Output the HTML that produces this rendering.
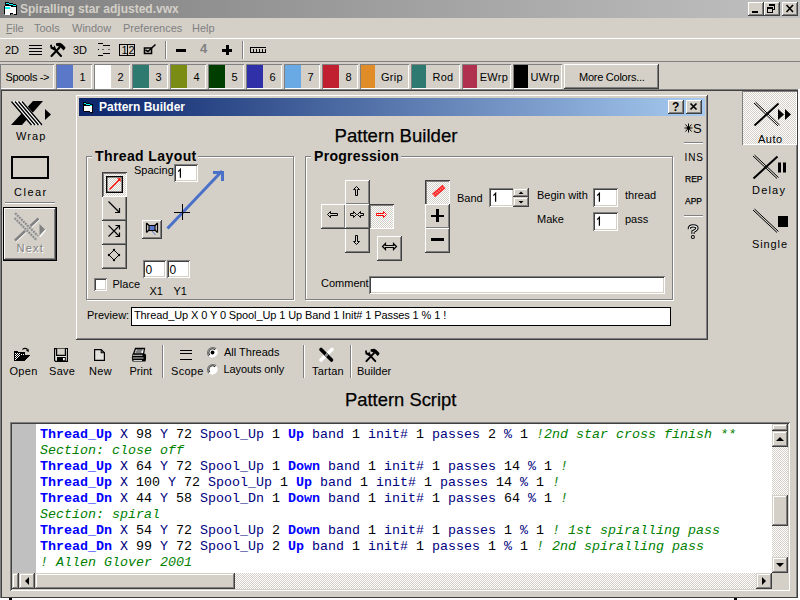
<!DOCTYPE html>
<html><head><meta charset="utf-8">
<style>
*{margin:0;padding:0;box-sizing:border-box}
html,body{width:800px;height:600px;overflow:hidden;background:#d4d0c8;font-family:"Liberation Sans",sans-serif;font-size:11px;color:#000}
.a{position:absolute}
svg{position:absolute;overflow:visible}
.raised{box-shadow:inset -1px -1px #404040,inset 1px 1px #fff,inset -2px -2px #808080,inset 2px 2px #d4d0c8}
.sunken{box-shadow:inset 1px 1px #808080,inset -1px -1px #fff,inset 2px 2px #404040,inset -2px -2px #d4d0c8}
.sbtn{box-shadow:inset -1px -1px #404040,inset 1px 1px #d4d0c8,inset -2px -2px #808080,inset 2px 2px #fff;background:#d4d0c8}
.thin{box-shadow:inset -1px -1px #808080,inset 1px 1px #fff}
.thins{box-shadow:inset 1px 1px #808080,inset -1px -1px #fff}
.t{position:absolute;white-space:nowrap;line-height:1}
.dither{background-color:#fff;background-image:linear-gradient(45deg,#d4d0c8 25%,transparent 25%,transparent 75%,#d4d0c8 75%),linear-gradient(45deg,#d4d0c8 25%,transparent 25%,transparent 75%,#d4d0c8 75%);background-size:2px 2px;background-position:0 0,1px 1px}
</style></head><body>
<div class="a " style="left:0px;top:0px;width:800px;height:18px;background:linear-gradient(to right,#808080,#c0c0c0)"></div>
<svg style="left:4px;top:2px" width="13" height="14" shape-rendering="crispEdges"><path d="M1 0h4v1h4v1h3v1h1v10h-3v-1h-3v1h-6v-1h-1v-8h1z" fill="#000"/><path d="M2 1h3v1h-3zM5 2h4v1h-4zM9 3h3v1h-3z" fill="#0ff"/><path d="M1 4h6v1h5v7h-3v-1h-3v2h-5z" fill="#fff"/><path d="M1 5h5v2h-5z" fill="#0ff"/></svg>
<div class="t" style="left:20px;top:3px;font-weight:bold;font-size:12px;color:#d4d0c8">Spiralling star adjusted.vwx</div>
<div class="a raised" style="left:748px;top:2px;width:16px;height:14px;background:#d4d0c8"></div>
<div class="a raised" style="left:764px;top:2px;width:16px;height:14px;background:#d4d0c8"></div>
<div class="a raised" style="left:782px;top:2px;width:16px;height:14px;background:#d4d0c8"></div>
<svg style="left:748px;top:2px" width="16" height="14" shape-rendering="crispEdges"><rect x="4" y="9" width="6" height="2" fill="#000"/></svg>
<svg style="left:764px;top:2px" width="16" height="14" shape-rendering="crispEdges"><path d="M5 2h6v5h-1v-3h-5zM9 7h2v1h-2z" fill="#000"/><path d="M3 5h6v6h-6zM4 7v3h4v-3z" fill="#000" fill-rule="evenodd"/></svg>
<svg style="left:782px;top:2px" width="16" height="14"><path d="M4.5 3L11 10M11 3L4.5 10" stroke="#000" stroke-width="1.6"/></svg>
<div class="t" style="left:6px;top:22.5px;color:#808080">File</div>
<div class="t" style="left:34px;top:22.5px;color:#808080">Tools</div>
<div class="t" style="left:72px;top:22.5px;color:#808080">Window</div>
<div class="t" style="left:123px;top:22.5px;color:#808080">Preferences</div>
<div class="t" style="left:192px;top:22.5px;color:#808080">Help</div>
<div class="a " style="left:6px;top:33px;width:6px;height:1px;background:#808080"></div>
<div class="a " style="left:0px;top:38px;width:800px;height:24px;box-shadow:inset 0 1px #fff,inset 0 -1px #808080"></div>
<div class="t" style="left:5px;top:45px;font-size:11px">2D</div>
<svg style="left:29px;top:45px" width="13" height="10"><path d="M0 0.5H13M0 3.5H13M0 6.5H13M0 9.5H13" stroke="#000" stroke-width="1.2"/></svg>
<svg style="left:49px;top:42px" width="18" height="16" viewBox="0 0 18 16"><path d="M2.5 14L10.5 5.5M12 14L5 6.5" stroke="#000" stroke-width="2.1" stroke-linecap="round"/><path d="M1 3L3 2.5V4.5L4.5 5.2L5.6 3.6L6.5 5.8L7 7.2L5 8.2L1.6 6.6Z" fill="#000"/><path d="M7 1.2L11 0.8L13.2 2L16.4 5.2L16.2 6.6L14.6 8.4L11.6 5.6L9 4.2L7 3.6Z" fill="#000"/></svg>
<div class="t" style="left:73px;top:45px;font-size:11px">3D</div>
<svg style="left:97px;top:42px" width="14" height="14"><path d="M1 1.5H6M6 3.5H13M1 13.5H6M6 11.5H13" stroke="#000" stroke-width="1"/><path d="M1 7.5H2M5.5 7.5H6.5M11.5 7.5H12.5" stroke="#000" stroke-width="1"/></svg>
<svg style="left:119px;top:44px" width="16" height="12" shape-rendering="crispEdges"><rect x="0.5" y="0.5" width="15" height="11" fill="none" stroke="#000" stroke-width="1.4"/><rect x="8" y="0" width="1" height="12" fill="#000"/></svg>
<div class="t" style="left:121.5px;top:45px;font-size:11px">1</div>
<div class="t" style="left:128.5px;top:45px;font-size:11px">2</div>
<svg style="left:143px;top:43px" width="14" height="12"><path d="M1.5 5H8.5V10.5H1.5z" fill="none" stroke="#000" stroke-width="1.6"/><path d="M2.5 7L5 8.5L12.5 1.5" fill="none" stroke="#000" stroke-width="1.5"/></svg>
<div class="a" style="left:165px;top:41px;width:2px;height:18px;box-shadow:inset 1px 0 #808080,inset -1px 0 #fff"></div>
<div class="a" style="left:176px;top:49px;width:10px;height:3px;background:#000"></div>
<div class="t" style="left:200px;top:42px;font-size:13px;font-weight:bold;color:#808080">4</div>
<div class="a" style="left:222px;top:49px;width:10px;height:2.5px;background:#000"></div>
<div class="a" style="left:225.5px;top:45px;width:3px;height:10px;background:#000"></div>
<div class="a" style="left:242px;top:41px;width:2px;height:18px;box-shadow:inset 1px 0 #808080,inset -1px 0 #fff"></div>
<svg style="left:250px;top:47px" width="17" height="6" shape-rendering="crispEdges"><rect x="0" y="0" width="16" height="1.3" fill="#000"/><rect x="0" y="4.7" width="16" height="1.3" fill="#000"/><rect x="0" y="0" width="1.3" height="6" fill="#000"/><rect x="14.7" y="2" width="1.3" height="4" fill="#000"/><rect x="3" y="2" width="1.2" height="3" fill="#000"/><rect x="6" y="2" width="1.2" height="3" fill="#000"/><rect x="9" y="2" width="1.2" height="3" fill="#000"/><rect x="12" y="2" width="1.2" height="3" fill="#000"/></svg>

<div class="a thins" style="left:0px;top:64px;width:54px;height:25px;"></div>
<div class="t" style="left:5.5px;top:72px;letter-spacing:-0.35px">Spools -&gt;</div>
<div class="a thins" style="left:56px;top:64px;width:36px;height:25px;"></div>
<div class="a " style="left:57px;top:65px;width:16px;height:23px;background:#5b78c8"></div>
<div class="t" style="left:73px;width:19px;text-align:center;top:72px">1</div>
<div class="a thins" style="left:94px;top:64px;width:36px;height:25px;"></div>
<div class="a " style="left:95px;top:65px;width:16px;height:23px;background:#ffffff"></div>
<div class="t" style="left:111px;width:19px;text-align:center;top:72px">2</div>
<div class="a thins" style="left:132px;top:64px;width:36px;height:25px;"></div>
<div class="a " style="left:133px;top:65px;width:16px;height:23px;background:#2e7a70"></div>
<div class="t" style="left:149px;width:19px;text-align:center;top:72px">3</div>
<div class="a thins" style="left:170px;top:64px;width:36px;height:25px;"></div>
<div class="a " style="left:171px;top:65px;width:16px;height:23px;background:#7a8c14"></div>
<div class="t" style="left:187px;width:19px;text-align:center;top:72px">4</div>
<div class="a thins" style="left:208px;top:64px;width:36px;height:25px;"></div>
<div class="a " style="left:209px;top:65px;width:16px;height:23px;background:#003e00"></div>
<div class="t" style="left:225px;width:19px;text-align:center;top:72px">5</div>
<div class="a thins" style="left:246px;top:64px;width:36px;height:25px;"></div>
<div class="a " style="left:247px;top:65px;width:16px;height:23px;background:#3030a8"></div>
<div class="t" style="left:263px;width:19px;text-align:center;top:72px">6</div>
<div class="a thins" style="left:284px;top:64px;width:36px;height:25px;"></div>
<div class="a " style="left:285px;top:65px;width:16px;height:23px;background:#6aaae4"></div>
<div class="t" style="left:301px;width:19px;text-align:center;top:72px">7</div>
<div class="a thins" style="left:322px;top:64px;width:36px;height:25px;"></div>
<div class="a " style="left:323px;top:65px;width:16px;height:23px;background:#c02030"></div>
<div class="t" style="left:339px;width:19px;text-align:center;top:72px">8</div>
<div class="a thins" style="left:360px;top:64px;width:49px;height:25px;"></div>
<div class="a " style="left:361px;top:65px;width:14px;height:23px;background:#e08c28"></div>
<div class="t" style="left:375px;width:34px;text-align:center;top:72px;letter-spacing:0.3px">Grip</div>
<div class="a thins" style="left:411px;top:64px;width:49px;height:25px;"></div>
<div class="a " style="left:412px;top:65px;width:14px;height:23px;background:#2e7a70"></div>
<div class="t" style="left:426px;width:34px;text-align:center;top:72px;letter-spacing:0.3px">Rod</div>
<div class="a thins" style="left:462px;top:64px;width:49px;height:25px;"></div>
<div class="a " style="left:463px;top:65px;width:14px;height:23px;background:#b03050"></div>
<div class="t" style="left:477px;width:34px;text-align:center;top:72px;letter-spacing:0.3px">EWrp</div>
<div class="a thins" style="left:513px;top:64px;width:49px;height:25px;"></div>
<div class="a " style="left:514px;top:65px;width:14px;height:23px;background:#000000"></div>
<div class="t" style="left:528px;width:34px;text-align:center;top:72px;letter-spacing:0.3px">UWrp</div>
<div class="a raised" style="left:564px;top:64px;width:95px;height:25px;"></div>
<div class="t" style="left:579px;top:72px;letter-spacing:-0.25px">More Colors...</div>
<div class="a " style="left:0px;top:89px;width:798px;height:509px;box-shadow:inset 1px 1px #808080,inset 2px 2px #404040,inset -1px -1px #404040,inset -2px 0 #808080"></div>
<div class="a " style="left:798px;top:89px;width:2px;height:511px;background:#fff"></div>
<div class="a " style="left:0px;top:598px;width:800px;height:2px;background:#fff"></div>
<div class="a " style="left:9px;top:598px;width:3px;height:2px;background:#000"></div>
<div class="a " style="left:734px;top:598px;width:3px;height:2px;background:#000"></div>
<div class="a raised" style="left:76px;top:95px;width:632px;height:245px;"></div>
<div class="a " style="left:79px;top:98px;width:626px;height:18px;background:linear-gradient(to right,#0a246a,#a6caf0)"></div>
<div class="t" style="left:99px;top:101px;font-weight:bold;font-size:12px;color:#fff">Pattern Builder</div>
<svg style="left:11px;top:101px" width="41" height="25" viewBox="0 0 41 25">
<path d="M0 24H11L32 0H22z" fill="#000"/>
<path d="M0 0H12L32 24H20z" fill="#fff"/>
<path d="M0.5 0.5L20.5 24M4 0.5L24 24M7.5 0.5L27.5 24M11 0.5L31 24" stroke="#000" stroke-width="1.4"/>
<path d="M34 8V19L40 13.5z" fill="#000"/>
</svg>
<div class="t" style="left:16px;top:131px;letter-spacing:1.1px">Wrap</div>
<div class="a " style="left:11px;top:156px;width:38px;height:23px;border:2px solid #000"></div>
<div class="t" style="left:14px;top:187px;letter-spacing:1.5px">Clear</div>
<div class="a " style="left:5px;top:202px;width:50px;height:2px;box-shadow:inset 0 1px #808080,inset 0 -1px #fff"></div>
<div class="a " style="left:3px;top:207px;width:54px;height:54px;border:1px solid #000"></div>
<div class="a raised" style="left:4px;top:208px;width:52px;height:52px;"></div>
<svg style="left:0px;top:0px" width="60" height="260">
<path d="M16 241.5L39.5 219.5" stroke="#fff" stroke-width="1.5"/>
<path d="M15 240.5L38.5 218.5" stroke="#808080" stroke-width="2.4"/>
<path d="M14.5 212.5L38 236M14 217.5L36.5 240" stroke="#d4d0c8" stroke-width="3.2"/>
<path d="M14.5 212.5L38 236M14 217.5L36.5 240" stroke="#888" stroke-width="2.2"/>
<path d="M14.5 212.5L38 236M14 217.5L36.5 240" stroke="#fff" stroke-width="2.2" stroke-dasharray="1 1.83" opacity="0.6"/>
<path d="M40 236.5L45.5 230" stroke="#fff" stroke-width="1.3"/>
<path d="M39.5 224L45 229.5L39.5 235.5Z" fill="#808080"/>
</svg>
<div class="t" style="left:16.5px;top:242.5px;letter-spacing:1.2px;color:#808080;text-shadow:1px 1px #fff">Next</div>
<div class="a dither" style="left:742px;top:91px;width:55px;height:54px;box-shadow:inset 1px 1px #808080,inset -1px -1px #fff"></div>
<svg style="left:752px;top:101px" width="42" height="27" viewBox="0 0 42 27">
<path d="M2 2L26 25M3.5 1L27.5 24" stroke="#000" stroke-width="1"/>
<path d="M2.5 24.5L26.5 2.5" stroke="#000" stroke-width="2"/>
<path d="M26 8V19L32 13.5zM33 8V19L39 13.5z" fill="#000"/>
</svg>
<div class="t" style="left:758px;top:134px;letter-spacing:0.5px">Auto</div>
<svg style="left:752px;top:155px" width="42" height="26" viewBox="0 0 42 26">
<path d="M1 1L25 23.5M2.5 0L26.5 22.5" stroke="#000" stroke-width="1"/>
<path d="M1.5 23.5L25.5 1.5" stroke="#000" stroke-width="2"/>
<rect x="26" y="7.5" width="3" height="10" fill="#000"/><rect x="31" y="7.5" width="3" height="10" fill="#000"/>
</svg>
<div class="t" style="left:752px;top:185px;letter-spacing:1.2px">Delay</div>
<svg style="left:752px;top:209px" width="42" height="26" viewBox="0 0 42 26">
<path d="M1 1L25 23.5M2.5 0L26.5 22.5" stroke="#000" stroke-width="1"/>
<rect x="26" y="7" width="10" height="11" fill="#000"/>
</svg>
<div class="t" style="left:752px;top:239px;letter-spacing:0.9px">Single</div>
<div class="a raised" style="left:668px;top:100px;width:16px;height:14px;background:#d4d0c8"></div>
<div class="a raised" style="left:686px;top:100px;width:16px;height:14px;background:#d4d0c8"></div>
<div class="t" style="left:672px;top:101px;font-weight:bold;font-size:12px">?</div>
<svg style="left:686px;top:100px" width="16" height="14"><path d="M4.5 3.5L10.5 9.5M10.5 3.5L4.5 9.5" stroke="#000" stroke-width="1.7"/></svg>
<svg style="left:83px;top:102px" width="10" height="11" shape-rendering="crispEdges"><path d="M0 0h3v1h4v1h3v9h-3v-1h-6v-1h-1z" fill="#000"/><path d="M1 1h2v1h-2zM3 2h4v1h-4zM7 3h2v1h-2z" fill="#0ff"/><path d="M1 4h8v6h-2v-1h-6z" fill="#fff"/></svg>
<div class="t" style="left:334.5px;top:126.5px;font-size:18.6px;-webkit-text-stroke:0.25px #000">Pattern Builder</div>
<svg style="left:684px;top:123px" width="9" height="10"><path d="M4.5 0.5V9.5M0.5 5H8.5M1.5 1.5L7.5 8.5M7.5 1.5L1.5 8.5" stroke="#000" stroke-width="1"/><circle cx="4.5" cy="5" r="1.6"/></svg>
<div class="t" style="left:693px;top:121.5px;font-size:13px">S</div>
<div class="a " style="left:684px;top:142px;width:19px;height:2px;box-shadow:inset 0 1px #808080,inset 0 -1px #fff"></div>
<div class="t" style="left:684.5px;top:153px;font-size:10px;letter-spacing:0.9px">INS</div>
<div class="t" style="left:685px;top:175px;font-size:8.5px;-webkit-text-stroke:0.25px #000">REP</div>
<div class="t" style="left:685px;top:197px;font-size:8.5px;-webkit-text-stroke:0.25px #000">APP</div>
<div class="a " style="left:684px;top:215px;width:19px;height:2px;box-shadow:inset 0 1px #808080,inset 0 -1px #fff"></div>
<svg style="left:682px;top:220px" width="22" height="22"><path d="M7.3 9C7 6.7 8.6 5.9 11 5.9S15 6.6 15 8.2C15 9.7 13 10.6 11 11.6V14" fill="none" stroke="#000" stroke-width="3.2"/><path d="M7.3 9C7 6.7 8.6 5.9 11 5.9S15 6.6 15 8.2C15 9.7 13 10.6 11 11.6V14" fill="none" stroke="#fff" stroke-width="1.1"/><circle cx="10.9" cy="17" r="2" fill="#000"/><circle cx="10.9" cy="17" r="0.9" fill="#fff"/></svg>
<div class="a " style="left:87px;top:157px;width:208px;height:144px;border:1px solid #fff"></div>
<div class="a " style="left:86px;top:156px;width:208px;height:144px;border:1px solid #808080"></div>
<div class="a " style="left:92px;top:148px;width:106px;height:16px;background:#d4d0c8"></div>
<div class="t" style="left:95px;top:149px;font-size:14px;font-weight:bold;letter-spacing:0.4px">Thread Layout</div>
<div class="t" style="left:134px;top:165px;">Spacing</div>
<div class="a sunken" style="left:174px;top:164px;width:24px;height:18px;background:#fff"></div>
<svg style="left:0;top:0" width="800" height="600"><path d="M178.20000000000002 171.6L180.4 169.3V177.8" fill="none" stroke="#000" stroke-width="1.25"/></svg>
<div class="a raised" style="left:102px;top:244px;width:25px;height:25px;"></div>
<div class="a raised" style="left:102px;top:220px;width:25px;height:25px;"></div>
<div class="a raised" style="left:102px;top:196px;width:25px;height:25px;"></div>
<div class="a dither" style="left:102px;top:172px;width:25px;height:25px;box-shadow:inset 1px 1px #404040,inset -1px -1px #fff,inset 2px 2px #808080"></div>
<svg style="left:106px;top:176px" width="17" height="17"><rect x="0.7" y="0.7" width="15.6" height="15.6" fill="none" stroke="#000" stroke-width="1.4"/><path d="M3.5 13.5L13.5 3.5" stroke="#f00" stroke-width="1.2"/><path d="M11 2.3H14.7V6z" fill="#f00"/></svg>
<svg style="left:102px;top:196px" width="25" height="24"><path d="M6.5 5.5L17.5 16.5" stroke="#000" stroke-width="1.2"/><path d="M17.5 12V16.5H13" stroke="#000" stroke-width="1.2" fill="none"/></svg>
<svg style="left:102px;top:220px" width="25" height="24"><path d="M6.5 5.5L17.5 16.5M6.5 16.5L17.5 5.5" stroke="#000" stroke-width="1.1"/><path d="M13.5 5.5H17.5V9.5M13.5 16.5H17.5V12.5" stroke="#000" stroke-width="1.2" fill="none"/></svg>
<svg style="left:102px;top:244px" width="25" height="24"><path d="M12 6L17 11L12 16L7 11z" stroke="#000" stroke-width="1" fill="none"/><circle cx="12" cy="6" r="1.2"/><circle cx="17" cy="11" r="1.2"/><circle cx="12" cy="16" r="1.2"/><circle cx="7" cy="11" r="1.2"/></svg>
<div class="a raised" style="left:142px;top:220px;width:20px;height:19px;"></div>
<svg style="left:142px;top:220px" width="20" height="19"><path d="M4.5 3V12.5M4.5 3L7 5.5M4.5 12.5L7 10M15.5 3V12.5M15.5 3L13 5.5M15.5 12.5L13 10" stroke="#000" stroke-width="1.2" fill="none"/><path d="M10 11L13.5 15" stroke="#5a78d0" stroke-width="1"/><rect x="7" y="5.5" width="6" height="5" fill="#5a78d0" stroke="#000" stroke-width="1.1"/></svg>
<svg style="left:160px;top:165px" width="70" height="70"><path d="M7.5 63.5L62 6" stroke="#4a70c8" stroke-width="3"/><path d="M53 7.5H62.5V16" stroke="#4a70c8" stroke-width="3" fill="none"/><path d="M14 47.5H30M22.5 39V55" stroke="#000" stroke-width="1"/></svg>
<div class="a sunken" style="left:143px;top:260px;width:23px;height:18px;background:#fff"></div>
<div class="a sunken" style="left:167px;top:260px;width:23px;height:18px;background:#fff"></div>
<div class="t" style="left:145.5px;top:263.5px;font-size:12px">0</div>
<div class="t" style="left:169.5px;top:263.5px;font-size:12px">0</div>
<div class="a sunken" style="left:94px;top:278px;width:13px;height:13px;background:#fff"></div>
<div class="t" style="left:112.5px;top:279px;font-size:11px">Place</div>
<div class="t" style="left:149.5px;top:285.5px;font-size:11px">X1</div>
<div class="t" style="left:173.5px;top:285.5px;font-size:11px">Y1</div>
<div class="a " style="left:306px;top:157px;width:368px;height:144px;border:1px solid #fff"></div>
<div class="a " style="left:305px;top:156px;width:368px;height:144px;border:1px solid #808080"></div>
<div class="a " style="left:311px;top:148px;width:90px;height:16px;background:#d4d0c8"></div>
<div class="t" style="left:314px;top:149px;font-size:14px;font-weight:bold;letter-spacing:0.3px">Progression</div>
<div class="a raised" style="left:345px;top:180px;width:25px;height:25px;"></div>
<div class="a raised" style="left:321px;top:204px;width:25px;height:25px;"></div>
<div class="a raised" style="left:345px;top:228px;width:25px;height:25px;"></div>
<div class="a dither" style="left:369px;top:204px;width:25px;height:25px;box-shadow:inset 1px 1px #404040,inset -1px -1px #fff,inset 2px 2px #808080"></div>
<div class="a raised" style="left:345px;top:204px;width:25px;height:25px;"></div>
<div class="a raised" style="left:377px;top:236px;width:25px;height:25px;"></div>
<svg style="left:345px;top:180px" width="24" height="24"><path d="M11.5 6.5L14.5 9.5H12.5V15.5H10.5V9.5H8.5Z" fill="none" stroke="#000" stroke-width="1"/></svg>
<svg style="left:345px;top:228px" width="24" height="24"><path d="M11.5 16.5L14.5 13.5H12.5V7.5H10.5V13.5H8.5Z" fill="none" stroke="#000" stroke-width="1"/></svg>
<svg style="left:321px;top:204px" width="24" height="24"><path d="M6.5 10.5L9.5 7.5V9.5H16.5V11.5H9.5V13.5Z" fill="none" stroke="#000" stroke-width="1"/></svg>
<svg style="left:369px;top:204px" width="24" height="24"><path d="M17.5 10.5L14.5 7.5V9.5H7.5V11.5H14.5V13.5Z" fill="none" stroke="#f00" stroke-width="1"/></svg>
<svg style="left:345px;top:204px" width="24" height="24"><path d="M11.5 10.5L8.5 7.5V9.5H5.5V11.5H8.5V13.5Z M12.5 10.5L15.5 7.5V9.5H18.5V11.5H15.5V13.5Z" fill="none" stroke="#000" stroke-width="1"/></svg>
<svg style="left:377px;top:236px" width="25" height="25"><path d="M5.5 10.5L8.5 7.5V9.5H16.5V7.5L19.5 10.5L16.5 13.5V11.5H8.5V13.5Z" fill="none" stroke="#000" stroke-width="1.2"/></svg>
<div class="a dither" style="left:425px;top:180px;width:25px;height:25px;box-shadow:inset 1px 1px #404040,inset -1px -1px #fff,inset 2px 2px #808080"></div>
<svg style="left:425px;top:180px" width="25" height="24"><path d="M8.5 15.5L19 6.5" stroke="#ff2020" stroke-width="4.4"/><path d="M8.5 15.5L19 6.5" stroke="#ffb0b0" stroke-width="2" stroke-dasharray="1 1.2" opacity="0.8"/></svg>
<div class="a raised" style="left:425px;top:204px;width:25px;height:25px;"></div>
<div class="a raised" style="left:425px;top:228px;width:25px;height:25px;"></div>
<div class="a " style="left:431px;top:214.5px;width:13px;height:2.5px;background:#000"></div>
<div class="a " style="left:436px;top:209px;width:2.5px;height:13px;background:#000"></div>
<div class="a " style="left:431px;top:238px;width:13px;height:2.5px;background:#000"></div>
<div class="t" style="left:457px;top:193px;">Band</div>
<div class="a sunken" style="left:489px;top:188px;width:25px;height:19px;background:#fff"></div>
<svg style="left:0;top:0" width="800" height="600"><path d="M493.40000000000003 195.6L495.6 193.3V201.8" fill="none" stroke="#000" stroke-width="1.25"/></svg>
<div class="a sbtn" style="left:513px;top:188px;width:16px;height:9px;"></div>
<div class="a sbtn" style="left:513px;top:197px;width:16px;height:10px;"></div>
<svg style="left:513px;top:188px" width="16" height="19"><path d="M5.5 6H10.5L8 3.5z M5.5 13H10.5L8 15.5z" fill="#000"/></svg>
<div class="t" style="left:537px;top:190px;">Begin with</div>
<div class="a sunken" style="left:593px;top:188px;width:25px;height:19px;background:#fff"></div>
<svg style="left:0;top:0" width="800" height="600"><path d="M597.1999999999999 195.6L599.4 193.3V201.8" fill="none" stroke="#000" stroke-width="1.25"/></svg>
<div class="t" style="left:625px;top:190px;">thread</div>
<div class="t" style="left:537px;top:214px;">Make</div>
<div class="a sunken" style="left:593px;top:212px;width:25px;height:19px;background:#fff"></div>
<svg style="left:0;top:0" width="800" height="600"><path d="M597.1999999999999 219.6L599.4 217.3V225.8" fill="none" stroke="#000" stroke-width="1.25"/></svg>
<div class="t" style="left:625px;top:214px;">pass</div>
<div class="t" style="left:321px;top:278px;">Comment</div>
<div class="a sunken" style="left:369px;top:276px;width:296px;height:18px;background:#fff"></div>
<div class="t" style="left:87px;top:310px;font-size:11px">Preview:</div>
<div class="a " style="left:131px;top:307px;width:540px;height:19px;border:1px solid #000;background:#fff"></div>
<div class="t" style="left:134px;top:310px;font-size:11px;letter-spacing:-0.11px">Thread_Up X 0 Y 0 Spool_Up 1 Up Band 1 Init# 1 Passes 1 % 1 !</div>
<svg style="left:13px;top:347px" width="18" height="15" viewBox="0 0 18 15" shape-rendering="crispEdges">
<path d="M1 4H5V5H12V8H17L11.5 14H1Z" fill="#000"/>
<path d="M2 6h1v1h-1zM4 6h1v1h-1zM6 6h1v1h-1zM8 7h1v1h-1zM10 7h1v1h-1zM3 7h1v1h-1zM5 7h1v1h-1zM2 8h1v1h-1zM4 8h1v1h-1zM6 8h1v1h-1zM3 9h1v1h-1zM5 9h1v1h-1zM2 10h1v1h-1zM4 10h1v1h-1zM3 11h1v1h-1zM2 12h1v1h-1z" fill="#fff"/>
</svg>
<svg style="left:13px;top:347px" width="18" height="15" viewBox="0 0 18 15">
<path d="M9.5 2.5C10.5 1 13 0.8 14.5 2.5" fill="none" stroke="#000" stroke-width="1.3"/><path d="M13 3.8L15.8 5L15.6 1.8z" fill="#000"/>
</svg>
<svg style="left:54px;top:348px" width="14" height="14" viewBox="0 0 14 14">
<path d="M0.6 0.6H13.4V13.4H1.6L0.6 12.4Z" fill="#e4e2dc" stroke="#000" stroke-width="1.2"/><path d="M2.6 0.6V7.4H11.4V0.6" fill="#d4d0c8" stroke="#000" stroke-width="1.2"/><path d="M3 9H11.8V13.4H3z" fill="#000"/><path d="M9 10H10.8V12.3H9z" fill="#fff"/><path d="M12 1.5h1v1h-1z" fill="#fff"/>
</svg>
<svg style="left:94px;top:349px" width="11" height="12" viewBox="0 0 11 12">
<path d="M0.6 0.6H7.2L10.4 3.8V11.4H0.6Z" fill="#e4e2dc" stroke="#000" stroke-width="1.2"/><path d="M7.2 0.6V3.8H10.4" fill="none" stroke="#000" stroke-width="1.1"/>
</svg>
<svg style="left:130px;top:347px" width="18" height="16" viewBox="0 0 18 16">
<path d="M5.5 1.5H14.5L13.5 7H3.5Z" fill="#fff" stroke="#000" stroke-width="1.3"/><path d="M6.5 3H12.5M5.5 5H11.5" stroke="#000" stroke-width="1"/>
<path d="M2.5 6.8H15.5Q16.8 9.5 15.5 14.6H2.5Q1.2 10.5 2.5 6.8Z" fill="#000"/>
<path d="M2.8 8.3H12.5M2.8 11H13.5M3.5 13.5H12" stroke="#e8e8e8" stroke-width="0.9"/>
</svg>
<div class="t" style="left:9.5px;top:366px;letter-spacing:0.3px">Open</div>
<div class="t" style="left:49px;top:366px;letter-spacing:0.3px">Save</div>
<div class="t" style="left:89px;top:366px;letter-spacing:0.3px">New</div>
<div class="t" style="left:129.5px;top:366px;">Print</div>
<div class="a " style="left:162px;top:345px;width:2px;height:33px;box-shadow:inset 1px 0 #808080,inset -1px 0 #fff"></div>
<svg style="left:180px;top:349px" width="12" height="11" shape-rendering="crispEdges"><path d="M0 1.5H12M0 4.5H12M0 10.5H12" stroke="#000" stroke-width="1"/></svg>
<div class="t" style="left:171px;top:366px;letter-spacing:0.3px">Scope</div>
<svg style="left:207px;top:347px" width="11" height="11"><circle cx="5.5" cy="5.5" r="5" fill="#fff"/><path d="M9.1 1.9A5.1 5.1 0 0 0 1.9 9.1" fill="none" stroke="#707070" stroke-width="1.3"/><path d="M8.1 2.9A3.7 3.7 0 0 0 2.9 8.1" fill="none" stroke="#303030" stroke-width="1.3"/><path d="M2 9A5 5 0 0 0 9 2" fill="none" stroke="#fff" stroke-width="1"/><circle cx="5.5" cy="5.5" r="3" fill="#fff"/><circle cx='5.5' cy='5.5' r='1.9' fill='#000'/></svg>
<svg style="left:207px;top:364px" width="11" height="11"><circle cx="5.5" cy="5.5" r="5" fill="#fff"/><path d="M9.1 1.9A5.1 5.1 0 0 0 1.9 9.1" fill="none" stroke="#707070" stroke-width="1.3"/><path d="M8.1 2.9A3.7 3.7 0 0 0 2.9 8.1" fill="none" stroke="#303030" stroke-width="1.3"/><path d="M2 9A5 5 0 0 0 9 2" fill="none" stroke="#fff" stroke-width="1"/><circle cx="5.5" cy="5.5" r="3" fill="#fff"/></svg>
<div class="t" style="left:224px;top:347px;">All Threads</div>
<div class="t" style="left:223.5px;top:364px;letter-spacing:-0.1px">Layouts only</div>
<div class="a " style="left:303px;top:345px;width:2px;height:33px;box-shadow:inset 1px 0 #808080,inset -1px 0 #fff"></div>
<svg style="left:318px;top:347px" width="17" height="15" viewBox="0 0 17 15"><path d="M14 2.5L3 13" stroke="#fff" stroke-width="3.6" stroke-linecap="round"/><path d="M3 2.5L13.5 13" stroke="#000" stroke-width="3.6" stroke-linecap="round"/><path d="M7 7.5h1v1h-1zM9 7.5h1v1h-1zM8 6.5h1v1h-1zM8 8.5h1v1h-1z" fill="#fff"/></svg>
<div class="t" style="left:312px;top:366px;letter-spacing:0.2px">Tartan</div>
<div class="a " style="left:350px;top:345px;width:2px;height:33px;box-shadow:inset 1px 0 #808080,inset -1px 0 #fff"></div>
<svg style="left:364px;top:348px" width="17" height="15" viewBox="0 0 18 16"><path d="M2.5 14L10.5 5.5M12 14L5 6.5" stroke="#000" stroke-width="2.1" stroke-linecap="round"/><path d="M1 3L3 2.5V4.5L4.5 5.2L5.6 3.6L6.5 5.8L7 7.2L5 8.2L1.6 6.6Z" fill="#000"/><path d="M7 1.2L11 0.8L13.2 2L16.4 5.2L16.2 6.6L14.6 8.4L11.6 5.6L9 4.2L7 3.6Z" fill="#000"/></svg>
<div class="t" style="left:357px;top:366px;">Builder</div>
<div class="t" style="left:345px;top:390.5px;font-size:18.4px;-webkit-text-stroke:0.25px #000">Pattern Script</div>
<div class="a sunken" style="left:10px;top:422px;width:780px;height:169px;background:#fff"></div>
<div class="a " style="left:12px;top:424px;width:24px;height:149px;background:#c0c0c0"></div>
<div class="a" style="left:40px;top:427px;width:732px;height:146px;overflow:hidden;font-family:'Liberation Mono',monospace;font-size:13.333px;line-height:16px;white-space:pre"><b style="color:#0000ff">Thread_Up</b> <span style="color:#000080">X</span> <span style="color:#000">98</span> <span style="color:#000080">Y</span> <span style="color:#000">72</span> <span style="color:#000080">Spool_Up</span> <span style="color:#000">1</span> <b style="color:#0000ff">Up</b> <span style="color:#000080">band</span> <span style="color:#000">1</span> <span style="color:#000080">init#</span> <span style="color:#000">1</span> <span style="color:#000080">passes</span> <span style="color:#000">2</span> <span style="color:#000080">%</span> <span style="color:#000">1</span> <i style="color:#008000">!2nd star cross finish **</i>
<i style="color:#008000">Section: close off</i>
<b style="color:#0000ff">Thread_Up</b> <span style="color:#000080">X</span> <span style="color:#000">64</span> <span style="color:#000080">Y</span> <span style="color:#000">72</span> <span style="color:#000080">Spool_Up</span> <span style="color:#000">1</span> <b style="color:#0000ff">Down</b> <span style="color:#000080">band</span> <span style="color:#000">1</span> <span style="color:#000080">init#</span> <span style="color:#000">1</span> <span style="color:#000080">passes</span> <span style="color:#000">14</span> <span style="color:#000080">%</span> <span style="color:#000">1</span> <i style="color:#008000">!</i>
<b style="color:#0000ff">Thread_Up</b> <span style="color:#000080">X</span> <span style="color:#000">100</span> <span style="color:#000080">Y</span> <span style="color:#000">72</span> <span style="color:#000080">Spool_Up</span> <span style="color:#000">1</span> <b style="color:#0000ff">Up</b> <span style="color:#000080">band</span> <span style="color:#000">1</span> <span style="color:#000080">init#</span> <span style="color:#000">1</span> <span style="color:#000080">passes</span> <span style="color:#000">14</span> <span style="color:#000080">%</span> <span style="color:#000">1</span> <i style="color:#008000">!</i>
<b style="color:#0000ff">Thread_Dn</b> <span style="color:#000080">X</span> <span style="color:#000">44</span> <span style="color:#000080">Y</span> <span style="color:#000">58</span> <span style="color:#000080">Spool_Dn</span> <span style="color:#000">1</span> <b style="color:#0000ff">Down</b> <span style="color:#000080">band</span> <span style="color:#000">1</span> <span style="color:#000080">init#</span> <span style="color:#000">1</span> <span style="color:#000080">passes</span> <span style="color:#000">64</span> <span style="color:#000080">%</span> <span style="color:#000">1</span> <i style="color:#008000">!</i>
<i style="color:#008000">Section: spiral</i>
<b style="color:#0000ff">Thread_Dn</b> <span style="color:#000080">X</span> <span style="color:#000">54</span> <span style="color:#000080">Y</span> <span style="color:#000">72</span> <span style="color:#000080">Spool_Up</span> <span style="color:#000">2</span> <b style="color:#0000ff">Down</b> <span style="color:#000080">band</span> <span style="color:#000">1</span> <span style="color:#000080">init#</span> <span style="color:#000">1</span> <span style="color:#000080">passes</span> <span style="color:#000">1</span> <span style="color:#000080">%</span> <span style="color:#000">1</span> <i style="color:#008000">! 1st spiralling pass</i>
<b style="color:#0000ff">Thread_Dn</b> <span style="color:#000080">X</span> <span style="color:#000">99</span> <span style="color:#000080">Y</span> <span style="color:#000">72</span> <span style="color:#000080">Spool_Up</span> <span style="color:#000">2</span> <b style="color:#0000ff">Up</b> <span style="color:#000080">band</span> <span style="color:#000">1</span> <span style="color:#000080">init#</span> <span style="color:#000">1</span> <span style="color:#000080">passes</span> <span style="color:#000">1</span> <span style="color:#000080">%</span> <span style="color:#000">1</span> <i style="color:#008000">! 2nd spiralling pass</i>
<i style="color:#008000">! Allen Glover 2001</i></div>
<div class="a sbtn" style="left:772px;top:424px;width:16px;height:7px;"></div>
<div class="a sbtn" style="left:772px;top:431px;width:16px;height:16px;"></div>
<svg style="left:772px;top:431px" width="16" height="16"><path d="M4 10H12L8 6z" fill="#000"/></svg>
<div class="a dither" style="left:772px;top:447px;width:16px;height:110px;"></div>
<div class="a sbtn" style="left:772px;top:495px;width:16px;height:31px;"></div>
<div class="a sbtn" style="left:772px;top:557px;width:16px;height:16px;"></div>
<svg style="left:772px;top:557px" width="16" height="16"><path d="M4 6H12L8 10z" fill="#000"/></svg>
<div class="a sbtn" style="left:12px;top:573px;width:7px;height:16px;"></div>
<div class="a sbtn" style="left:19px;top:573px;width:16px;height:16px;"></div>
<svg style="left:19px;top:573px" width="16" height="16"><path d="M10 4V12L6 8z" fill="#000"/></svg>
<div class="a dither" style="left:35px;top:573px;width:721px;height:16px;"></div>
<div class="a sbtn" style="left:35px;top:573px;width:200px;height:16px;"></div>
<div class="a sbtn" style="left:756px;top:573px;width:16px;height:16px;"></div>
<svg style="left:756px;top:573px" width="16" height="16"><path d="M6 4V12L10 8z" fill="#000"/></svg>
<div class="a " style="left:772px;top:573px;width:16px;height:16px;background:#d4d0c8"></div>
</body></html>
